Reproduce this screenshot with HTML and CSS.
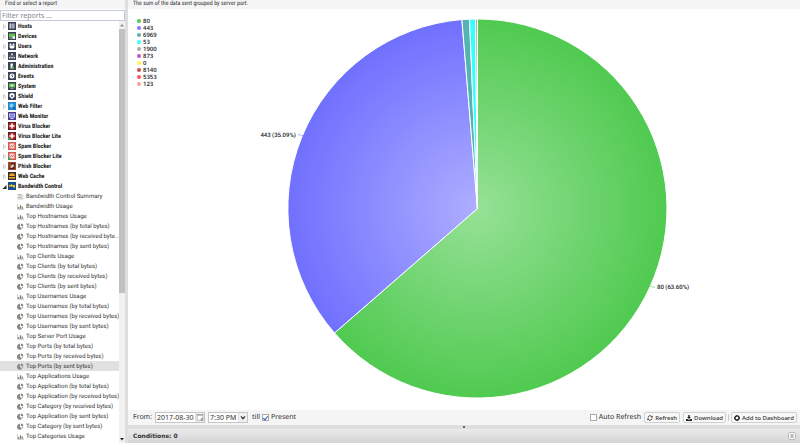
FILE: index.html
```html
<!DOCTYPE html>
<html lang="en">
<head>
    <meta charset="UTF-8">
    <meta name="viewport" content="width=device-width, initial-scale=1.0">
    <title>Reports</title>
    <link rel="stylesheet" href="styles.css">
</head>
<body>

<!-- Icon shapes shared by the tree and the toolbar -->
<svg class="sprite" aria-hidden="true">
    <symbol id="arrow" viewBox="0 0 8 8"><path d="M3.500 2.500 6 4.500 3.500 6.500z" fill="#fff" stroke="#bbb" stroke-width=".7"/></symbol>
    <symbol id="arrow-open" viewBox="0 0 8 8"><path d="M6.500 3v4h-4z" fill="#222"/></symbol>
    <symbol id="hosts" viewBox="0 0 16 16"><path fill="#3b4054" d="M0 0h16v16H0z"/><path fill="#c9ccd5" d="M3 3h3v10H3zM7 3h2.500v10H7zM10.500 3H13v10h-2.500z"/></symbol>
    <symbol id="devices" viewBox="0 0 16 16"><path fill="#3b4054" d="M0 0h16v16H0z"/><path fill="#62c24a" d="M2 3h12v8H2z"/><path fill="#dfe8dc" d="M9 8h5v6H9zM3 12h5v1H3z"/></symbol>
    <symbol id="users" viewBox="0 0 16 16"><path fill="#3b4054" d="M0 0h16v16H0z"/><circle cx="5" cy="5" r="2" fill="#fff"/><circle cx="11" cy="5" r="2" fill="#fff"/><path fill="#fff" d="M3 7h10v3l-2 3H5l-2-3z"/></symbol>
    <symbol id="network" viewBox="0 0 16 16"><path fill="#3b4054" d="M0 0h16v16H0z"/><path fill="#d7dae2" d="M6 3h4v3H6zM2 10h3v3H2zM6.500 10h3v3h-3zM11 10h3v3h-3zM3 7.500h10v1H3z"/></symbol>
    <symbol id="admin" viewBox="0 0 16 16"><path fill="#3b4054" d="M0 0h16v16H0z"/><path fill="#fff" d="M5 3h5v10H5z"/><path fill="#5fc247" d="M6 13 9 6l4 7z"/></symbol>
    <symbol id="events" viewBox="0 0 16 16"><path fill="#3b4054" d="M0 0h16v16H0z"/><circle cx="8" cy="8" r="5" fill="#fff"/><path d="M8 5v3l2 2" fill="none" stroke="#3b4054" stroke-width="2"/></symbol>
    <symbol id="system" viewBox="0 0 16 16"><path fill="#3b4054" d="M0 0h16v16H0z"/><path fill="#62c24a" d="M2 3h12v8H2z"/><path fill="#d8f0d0" d="M7 4h2v6H7zM5 6h6v2H5zM5 12h6v1H5z"/></symbol>
    <symbol id="shield" viewBox="0 0 16 16"><path fill="#3b4054" d="M0 0h16v16H0z"/><path fill="#fff" d="M8 2l5 2v5l-5 5-5-5V4z"/><circle cx="8" cy="8" r="2" fill="#3b4054"/></symbol>
    <symbol id="webfilter" viewBox="0 0 16 16"><path fill="#1f86d3" d="M0 0h16v16H0z"/><circle cx="7" cy="7" r="4" fill="#8fd0f5" stroke="#5fb4ea"/><path d="M10 10l5 5" stroke="#123e66" stroke-width="2"/></symbol>
    <symbol id="webmonitor" viewBox="0 0 16 16"><path fill="#4a3b90" d="M0 0h16v16H0z"/><path fill="#c3bfee" d="M2 3h12v8H2z"/><path fill="#5b86dc" d="M4 5h8v4H4z"/><path fill="#ddd" d="M5 12h6v2H5z"/></symbol>
    <symbol id="virus" viewBox="0 0 16 16"><path fill="#4a1a26" d="M0 0h16v16H0z"/><circle cx="8" cy="8" r="7" fill="#c7282a"/><path fill="#fff" d="M6.500 3h3v3.500H13v3H9.500V13h-3V9.500H3v-3h3.500z"/></symbol>
    <symbol id="spam" viewBox="0 0 16 16"><path fill="#d9544c" d="M0 0h16v16H0z"/><path fill="#f6ded6" d="M3 3h10v10H3z"/><path d="M4 11l3-4 2 3 3-5" fill="none" stroke="#c7564a" stroke-width="1.500"/></symbol>
    <symbol id="lite" viewBox="0 0 16 16"><path fill="#2aa35a" d="M0 9l7 7H0z"/></symbol>
    <symbol id="phish" viewBox="0 0 16 16"><path fill="#a2431d" d="M0 0h16v16H0z"/><path fill="#3a2a3a" d="M7 2h7v6H7zM3 9h10v5H3z"/><path fill="#e8cfc4" d="M5 9c2-4 4-2 5-5l2 2c0 4-3 6-7 6z"/></symbol>
    <symbol id="cache" viewBox="0 0 16 16"><path fill="#35312f" d="M0 0h16v16H0z"/><path fill="#f5a91d" d="M4 3h8l2 5H2zM2 10h12v3H2z"/></symbol>
    <symbol id="bandwidth" viewBox="0 0 16 16"><path fill="#14508a" d="M0 0h16v16H0z"/><path fill="#f3c224" d="M2 6h4V3l3 3h5v5h-4V9H2z"/></symbol>
    <symbol id="text" viewBox="0 0 12 12"><path d="M1 2.500h7M1 5h10M1 7.500h8M1 10h10" stroke="#888" stroke-width="1"/></symbol>
    <symbol id="bars" viewBox="0 0 12 12"><path d="M.5 2v8.500H12" fill="none" stroke="#888"/><path fill="#777" d="M2 7h2v3H2zM5 4h2v6H5zM8 6h2v4H8z"/></symbol>
    <symbol id="pie" viewBox="0 0 12 12"><path fill="#888" d="M5 1.500V6.500l3.500 3.500A5 5 0 1 1 5 1.500zM6.500.8A4.500 4.500 0 0 1 11 5H6.500zM7.500 6.500H11L9.500 9z"/></symbol>
    <symbol id="refresh" viewBox="0 0 12 12"><path d="M2 5a4.200 4.200 0 0 1 7.500-1.800M10 7a4.200 4.200 0 0 1-7.500 1.800" fill="none" stroke="#222" stroke-width="1.700"/><path fill="#222" d="M11.300 1v4H7.500zM.7 11V7h3.800z"/></symbol>
    <symbol id="download" viewBox="0 0 12 12"><path fill="#222" d="M4.500 0h3v4H10L6 8 2 4h2.500zM0 8h3l3 2 3-2h3v4H0z"/></symbol>
    <symbol id="plus" viewBox="0 0 12 12"><circle cx="6" cy="6" r="4.200" fill="none" stroke="#222" stroke-width="2.600"/><path d="M6 0v3M6 9v3M0 6h3M9 6h3" stroke="#222" stroke-width="2"/></symbol>
</svg>

<div class="app">
    <aside class="sidebar">
        <label class="panel-title" for="filter">Find or select a report</label>
        <input class="filter" id="filter" type="text" placeholder="Filter reports ...">
        <div class="tree-wrap">
            <ul class="tree">
                <li class="category"><svg><use href="#arrow"/></svg><svg class="icon"><use href="#hosts"/></svg><span>Hosts</span></li>
                <li class="category"><svg><use href="#arrow"/></svg><svg class="icon"><use href="#devices"/></svg><span>Devices</span></li>
                <li class="category"><svg><use href="#arrow"/></svg><svg class="icon"><use href="#users"/></svg><span>Users</span></li>
                <li class="category"><svg><use href="#arrow"/></svg><svg class="icon"><use href="#network"/></svg><span>Network</span></li>
                <li class="category"><svg><use href="#arrow"/></svg><svg class="icon"><use href="#admin"/></svg><span>Administration</span></li>
                <li class="category"><svg><use href="#arrow"/></svg><svg class="icon"><use href="#events"/></svg><span>Events</span></li>
                <li class="category"><svg><use href="#arrow"/></svg><svg class="icon"><use href="#system"/></svg><span>System</span></li>
                <li class="category"><svg><use href="#arrow"/></svg><svg class="icon"><use href="#shield"/></svg><span>Shield</span></li>
                <li class="category"><svg><use href="#arrow"/></svg><svg class="icon"><use href="#webfilter"/></svg><span>Web Filter</span></li>
                <li class="category"><svg><use href="#arrow"/></svg><svg class="icon"><use href="#webmonitor"/></svg><span>Web Monitor</span></li>
                <li class="category"><svg><use href="#arrow"/></svg><svg class="icon"><use href="#virus"/></svg><span>Virus Blocker</span></li>
                <li class="category"><svg><use href="#arrow"/></svg><svg class="icon"><use href="#virus"/><use href="#lite"/></svg><span>Virus Blocker Lite</span></li>
                <li class="category"><svg><use href="#arrow"/></svg><svg class="icon"><use href="#spam"/></svg><span>Spam Blocker</span></li>
                <li class="category"><svg><use href="#arrow"/></svg><svg class="icon"><use href="#spam"/><use href="#lite"/></svg><span>Spam Blocker Lite</span></li>
                <li class="category"><svg><use href="#arrow"/></svg><svg class="icon"><use href="#phish"/></svg><span>Phish Blocker</span></li>
                <li class="category"><svg><use href="#arrow"/></svg><svg class="icon"><use href="#cache"/></svg><span>Web Cache</span></li>
                <li class="category"><svg><use href="#arrow-open"/></svg><svg class="icon"><use href="#bandwidth"/></svg><span>Bandwidth Control</span></li>
                <li class="report"><svg><use href="#text"/></svg><span>Bandwidth Control Summary</span></li>
                <li class="report"><svg><use href="#bars"/></svg><span>Bandwidth Usage</span></li>
                <li class="report"><svg><use href="#bars"/></svg><span>Top Hostnames Usage</span></li>
                <li class="report"><svg><use href="#pie"/></svg><span>Top Hostnames (by total bytes)</span></li>
                <li class="report"><svg><use href="#pie"/></svg><span>Top Hostnames (by received byte...</span></li>
                <li class="report"><svg><use href="#pie"/></svg><span>Top Hostnames (by sent bytes)</span></li>
                <li class="report"><svg><use href="#bars"/></svg><span>Top Clients Usage</span></li>
                <li class="report"><svg><use href="#pie"/></svg><span>Top Clients (by total bytes)</span></li>
                <li class="report"><svg><use href="#pie"/></svg><span>Top Clients (by received bytes)</span></li>
                <li class="report"><svg><use href="#pie"/></svg><span>Top Clients (by sent bytes)</span></li>
                <li class="report"><svg><use href="#bars"/></svg><span>Top Usernames Usage</span></li>
                <li class="report"><svg><use href="#pie"/></svg><span>Top Usernames (by total bytes)</span></li>
                <li class="report"><svg><use href="#pie"/></svg><span>Top Usernames (by received bytes)</span></li>
                <li class="report"><svg><use href="#pie"/></svg><span>Top Usernames (by sent bytes)</span></li>
                <li class="report"><svg><use href="#bars"/></svg><span>Top Server Port Usage</span></li>
                <li class="report"><svg><use href="#pie"/></svg><span>Top Ports (by total bytes)</span></li>
                <li class="report"><svg><use href="#pie"/></svg><span>Top Ports (by received bytes)</span></li>
                <li class="report selected"><svg><use href="#pie"/></svg><span>Top Ports (by sent bytes)</span></li>
                <li class="report"><svg><use href="#bars"/></svg><span>Top Applications Usage</span></li>
                <li class="report"><svg><use href="#pie"/></svg><span>Top Application (by total bytes)</span></li>
                <li class="report"><svg><use href="#pie"/></svg><span>Top Application (by received bytes)</span></li>
                <li class="report"><svg><use href="#pie"/></svg><span>Top Category (by received bytes)</span></li>
                <li class="report"><svg><use href="#pie"/></svg><span>Top Application (by sent bytes)</span></li>
                <li class="report"><svg><use href="#pie"/></svg><span>Top Category (by sent bytes)</span></li>
                <li class="report"><svg><use href="#bars"/></svg><span>Top Categories Usage</span></li>
            </ul>
            <div class="scrollbar">
                <svg viewBox="0 0 6 8"><path d="M1 5.500h4L3 3z" fill="#888"/></svg>
                <div class="track"><div class="thumb"></div></div>
                <svg viewBox="0 0 6 8"><path d="M1 3h4L3 5.500z" fill="#222"/></svg>
            </div>
        </div>
    </aside>

    <div class="splitter"></div>

    <main class="main">
        <div class="panel-title">The sum of the data sent grouped by server port.</div>

        <div class="chart">
            <ul class="legend">
                <li><i class="dot c80"></i>80</li>
                <li><i class="dot c443"></i>443</li>
                <li><i class="dot c6969"></i>6969</li>
                <li><i class="dot c53"></i>53</li>
                <li><i class="dot c1900"></i>1900</li>
                <li><i class="dot c873"></i>873</li>
                <li><i class="dot c0"></i>0</li>
                <li><i class="dot c8140"></i>8140</li>
                <li><i class="dot c5353"></i>5353</li>
                <li><i class="dot c123"></i>123</li>
            </ul>
            <svg class="pie" viewBox="-350 -200 673 402">
                <defs>
                    <radialGradient id="green" gradientUnits="userSpaceOnUse" cx="0" cy="0" r="190"><stop offset="0" stop-color="#96e196"/><stop offset="1" stop-color="#50ca50"/></radialGradient>
                    <radialGradient id="blue" gradientUnits="userSpaceOnUse" cx="0" cy="0" r="190"><stop offset="0" stop-color="#aeaeff"/><stop offset="1" stop-color="#7070ff"/></radialGradient>
                </defs>
                <g stroke="#fff" stroke-width="1" stroke-linejoin="round">
                    <path fill="url(#green)" d="M0 0V-190A190 190 0 1 1 -143.300 124.800z"/>
                    <path fill="url(#blue)" d="M0 0L-143.300 124.800A190 190 0 0 1 -15.600 -189.400z"/>
                    <path fill="#54b4b4" d="M0 0L-15.600 -189.400A190 190 0 0 1 -8 -189.800z"/>
                    <path fill="#3ff" d="M0 0L-8 -189.800A190 190 0 0 1 -2 -190z"/>
                    <path fill="#aaa" d="M0 0L-2 -190A190 190 0 0 1 0 -190z"/>
                </g>
                <path d="M-175 -73C-178 -73 -176 -74 -180 -74" fill="none" stroke="#7070ff" stroke-width=".6"/>
                <path d="M173 78C176 78 174 79 178 79" fill="none" stroke="#50ca50" stroke-width=".6"/>
                <text x="-182" y="-72" text-anchor="end">443 (35.09%)</text>
                <text x="180" y="81">80 (63.60%)</text>
            </svg>
        </div>

        <form class="toolbar">
            <label for="from">From:</label>
            <div class="field date">
                <input id="from" type="text" value="2017-08-30">
                <button type="button" aria-label="Pick a date"><svg viewBox="0 0 10 10"><path d="M1.500 1.500h7v7h-7z" fill="#fff" stroke="#aaa"/><path d="M1 1h8v1.500H1zM6 6h3v3H6z" fill="#999"/></svg></button>
            </div>
            <div class="field time">
                <input type="text" value="7:30 PM" aria-label="Time">
                <button type="button" aria-label="Pick a time"><svg viewBox="0 0 10 10"><path d="M2.500 3.500 5 6.500l2.500-3" fill="none" stroke="#333" stroke-width="1.500"/></svg></button>
            </div>
            <label class="check till"><span>till</span><input type="checkbox" checked>Present</label>
            <span class="spacer"></span>
            <label class="check"><input type="checkbox">Auto Refresh</label>
            <button class="btn" type="button"><svg><use href="#refresh"/></svg>Refresh</button>
            <button class="btn" type="button"><svg><use href="#download"/></svg>Download</button>
            <span class="divider"></span>
            <button class="btn" type="button"><svg><use href="#plus"/></svg>Add to Dashboard</button>
        </form>

        <div class="h-splitter"><i></i></div>

        <div class="conditions">
            <span>Conditions: 0</span>
            <button type="button" aria-label="Expand"><svg viewBox="0 0 8 8"><path d="M2 4l2-2 2 2M2 6.500l2-2 2 2" fill="none" stroke="#555"/></svg></button>
        </div>
    </main>
</div>

</body>
</html>
```

FILE: styles.css
```css
* {
    box-sizing: border-box;
}

body {
    margin: 0;
    font-family: "Roboto Condensed", Roboto, sans-serif;
    font-size: 6px;
    color: #333;
    background-color: #fff;
    text-rendering: geometricPrecision;
}

ul {
    list-style: none;
    margin: 0;
    padding: 0;
}

.sprite {
    display: none;
}

.app {
    display: flex;
    height: 100vh;
    overflow: hidden;
}

/* Sidebar */
.sidebar {
    display: flex;
    flex-direction: column;
    width: 125px;
    flex-shrink: 0;
}

.panel-title {
    display: block;
    height: 9px;
    line-height: 8px;
    padding-left: 5px;
    background-color: #f5f5f5;
    color: #333;
    flex-shrink: 0;
}

.filter {
    height: 11px;
    width: 100%;
    margin: 1px 0 0;
    padding: 0 1px;
    border: 1px solid #c3cbd8;
    font-family: "Noto Sans", sans-serif;
    font-size: 7px;
    color: #333;
    flex-shrink: 0;
}

.filter::placeholder {
    color: #888;
}

.tree-wrap {
    display: flex;
    flex: 1;
    min-height: 0;
}

.tree {
    flex: 1;
    min-width: 0;
    overflow: hidden;
}

.tree li {
    display: flex;
    align-items: center;
    height: 10px;
    line-height: 8px;
    white-space: nowrap;
    cursor: pointer;
}

.tree span {
    padding-top: 2px;
}

.tree svg {
    width: 8px;
    height: 8px;
    flex-shrink: 0;
}

.category {
    font-weight: bold;
    color: #222;
}

.category .icon {
    margin-right: 2px;
}

.report {
    padding-left: 17px;
    gap: 2px;
    font-family: Roboto, sans-serif;
}

.tree .report svg {
    width: 7px;
    height: 7px;
}

.selected {
    background-color: #e0e0e0;
}

.scrollbar {
    display: flex;
    flex-direction: column;
    width: 6px;
    background-color: #f1f1f1;
}

.scrollbar svg {
    height: 8px;
}

.track {
    flex: 1;
}

.thumb {
    height: 65%;
    background-color: #c1c1c1;
}

.splitter {
    width: 3px;
    background-color: #dedede;
    flex-shrink: 0;
}

/* Chart */
.main {
    display: flex;
    flex-direction: column;
    flex: 1;
    min-width: 0;
}

.chart {
    position: relative;
    flex: 1;
    min-height: 0;
}

.legend {
    position: absolute;
    top: 8px;
    left: 9px;
    font-family: "Noto Sans", sans-serif;
    font-weight: 600;
}

.legend li {
    display: flex;
    align-items: center;
    gap: 2px;
    height: 7px;
}

.dot {
    width: 4px;
    height: 4px;
    border-radius: 50%;
}

.c80 { background-color: #50ca50; }
.c443 { background-color: #7a7aff; }
.c6969 { background-color: #54b4b4; }
.c53 { background-color: #3ff; }
.c1900 { background-color: #aaa; }
.c873 { background-color: #c853c8; }
.c0 { background-color: #fff457; }
.c8140 { background-color: #c65252; }
.c5353 { background-color: #ff5555; }
.c123 { background-color: #ff9d8e; }

.pie {
    display: block;
    width: 100%;
    height: 100%;
}

.pie text {
    font-family: Roboto, sans-serif;
    font-size: 6px;
    font-weight: 500;
    fill: #222;
}

/* Toolbar */
.toolbar {
    display: flex;
    align-items: center;
    gap: 3px;
    height: 15px;
    padding: 0 3px 0 5px;
    background-color: #f5f5f5;
    font-family: "Noto Sans", sans-serif;
    font-size: 7px;
    white-space: nowrap;
    flex-shrink: 0;
}

.field {
    display: flex;
    height: 11px;
    border: 1px solid #c5c5c5;
    background-color: #fff;
}

.date {
    width: 50px;
}

.time {
    width: 40px;
}

.field input {
    flex: 1;
    min-width: 0;
    padding: 0 0 0 1px;
    border: 0;
    background: none;
    font: inherit;
    color: #333;
}

.field button {
    width: 9px;
    padding: 0;
    border: 0;
    border-left: 1px solid #ddd;
    background-color: #f0f0f0;
}

.field svg {
    display: block;
    width: 8px;
    height: 9px;
}

.check {
    display: flex;
    align-items: center;
    gap: 2px;
}

.till {
    margin-left: 1px;
}

.check input {
    appearance: none;
    display: grid;
    place-items: center;
    width: 7px;
    height: 7px;
    margin: 0;
    border: 1px solid #aaa;
    background-color: #fff;
}

.check input:checked::after {
    content: "";
    width: 2px;
    height: 4px;
    border: solid #2f5fb0;
    border-width: 0 1px 1px 0;
    transform: rotate(40deg);
}

.spacer {
    flex: 1;
}

.btn {
    display: flex;
    align-items: center;
    gap: 2px;
    height: 11px;
    padding: 0 2px;
    border: 1px solid #d0d0d0;
    border-radius: 2px;
    background-color: #f8f8f8;
    font-family: "Noto Sans", sans-serif;
    font-size: 6px;
    font-weight: 500;
    color: #333;
    cursor: pointer;
}

.btn svg {
    width: 6px;
    height: 6px;
}

.divider {
    width: 1px;
    height: 7px;
    margin: 0 -1px;
    background-color: #ccc;
}

.h-splitter {
    display: flex;
    align-items: center;
    justify-content: center;
    height: 4px;
    background-color: #dedede;
    flex-shrink: 0;
}

.h-splitter i {
    width: 2px;
    height: 2px;
    background-color: #666;
}

.conditions {
    display: flex;
    align-items: center;
    justify-content: space-between;
    height: 14px;
    padding: 0 4px 0 5px;
    background: linear-gradient(#ebebeb, #d4d4d4);
    font-family: "DejaVu Sans", sans-serif;
    font-weight: bold;
    flex-shrink: 0;
}

.conditions button {
    width: 8px;
    height: 8px;
    padding: 0;
    border: 1px solid #bbb;
    border-radius: 2px;
    background-color: #f5f5f5;
}

.conditions svg {
    display: block;
    width: 6px;
    height: 6px;
}
```
